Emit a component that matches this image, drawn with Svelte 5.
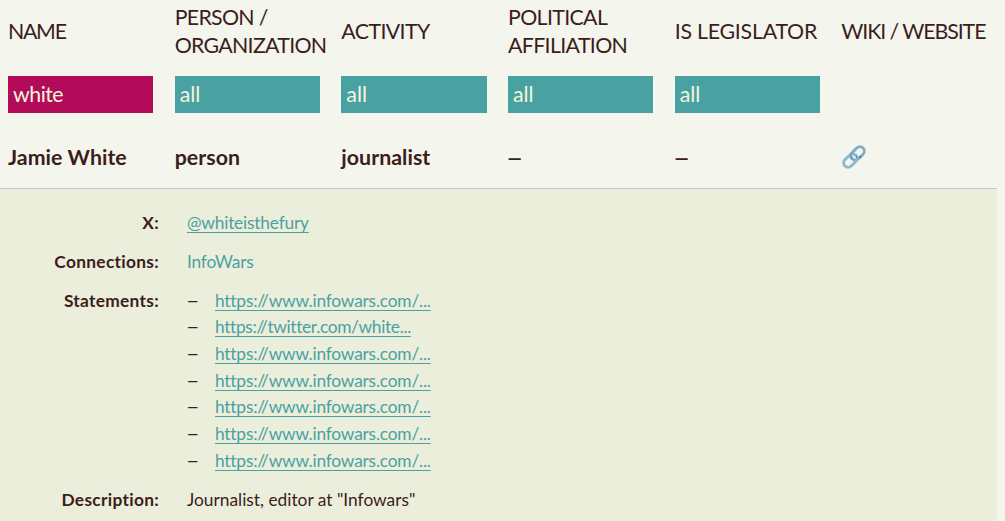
<script>
    const columns = [
        { title: 'Name', filter: 'white', value: 'Jamie White', spacing: -1.3, active: true },
        { title: 'Person / Organization', filter: 'all', value: 'person', spacing: -0.7 },
        { title: 'Activity', filter: 'all', value: 'journalist', spacing: -0.6 },
        { title: 'Political affiliation', filter: 'all', value: '–', spacing: -0.64 },
        { title: 'Is legislator', filter: 'all', value: '–', spacing: -0.22 },
        { title: 'Wiki / Website', spacing: -1.07, wide: true },
    ];

    const statements = [
        'https://www.infowars.com/...',
        'https://twitter.com/white...',
        'https://www.infowars.com/...',
        'https://www.infowars.com/...',
        'https://www.infowars.com/...',
        'https://www.infowars.com/...',
        'https://www.infowars.com/...',
    ];
</script>

<div class="table">
    <div class="row head">
        {#each columns as { title, spacing, wide }}
            <div class:wide style="letter-spacing: {spacing}px">{title}</div>
        {/each}
    </div>

    <div class="row filters">
        {#each columns as { filter, active }}
            {#if filter}
                <div class="filter" class:active>{filter}</div>
            {/if}
        {/each}
    </div>

    <div class="row person">
        {#each columns as { value }}
            {#if value}
                <div class:dash={value === '–'}>{value}</div>
            {:else}
                <a class="icon" href="#wiki" aria-label="Website">
                    <svg width="26" height="26" viewBox="0 0 26 26" fill="none">
                        <g transform="rotate(-45 13 13)">
                            <rect x="10.4" y="8.6" width="15.4" height="8.8" rx="4.4" stroke="#82adc8" stroke-width="2.9" />
                            <rect x="0.2" y="8.6" width="15.4" height="8.8" rx="4.4" stroke="#8bb9d2" stroke-width="2.9" />
                            <path d="M10.4 13a4.4 4.4 0 0 1 4.4-4.4" stroke="#71a7bf" stroke-width="2.7" />
                            <path d="M15.6 13v.2a4 4 0 0 1-1.4 3" stroke="#5c9db2" stroke-width="1.4" />
                            <path d="M16.6 17.4h2" stroke="#377c8f" stroke-width="1.8" />
                        </g>
                    </svg>
                </a>
            {/if}
        {/each}
    </div>

    <dl class="details">
        <dt>X:</dt>
        <dd><a class="handle" href="#x">@whiteisthefury</a></dd>

        <dt>Connections:</dt>
        <dd class="connection">InfoWars</dd>

        <dt>Statements:</dt>
        <dd>
            <ul>
                {#each statements as url}
                    <li><a class:twitter={url.includes('twitter')} href="#statement">{url}</a></li>
                {/each}
            </ul>
        </dd>

        <dt>Description:</dt>
        <dd class="description">Journalist, editor at "Infowars"</dd>
    </dl>
</div>

<style>
    :global(body) {
        background: #f4f5ec;
        overflow: hidden;
    }

    .table {
        width: 997px;
        padding-top: 3px;
        color: #3b1d20;
        font-family: Lato, sans-serif;
        font-size: 21.33px;
        font-variant-ligatures: none;
        line-height: 28px;
    }

    .row {
        display: grid;
        grid-template-columns: repeat(6, 166.67px);
        align-items: center;
        padding-left: 8px;
    }

    .head {
        height: 56px;
        text-transform: uppercase;
    }

    .head div {
        width: 154px;
    }

    .head .wide {
        white-space: nowrap;
    }

    .filters {
        padding-top: 17px;
    }

    .filter {
        box-sizing: border-box;
        width: 145.33px;
        height: 37px;
        padding-left: 5px;
        line-height: 36px;
        background: #4aa1a2;
        color: #f4f5dc;
    }

    .active {
        background: #b20b59;
        letter-spacing: -0.5px;
    }

    .person {
        height: 75px;
        border-bottom: 1px solid #c5c5ca;
        font-weight: 700;
    }

    .person > div {
        margin-top: 13px;
        letter-spacing: 0.05px;
    }

    .person .dash {
        margin-left: -2px;
        transform: scaleX(1.4);
        transform-origin: 0 50%;
    }

    .icon {
        display: flex;
        margin-top: 13px;
    }

    .details {
        display: grid;
        grid-template-columns: 159px 1fr;
        column-gap: 28px;
        row-gap: 12px;
        height: 340px;
        align-content: start;
        box-sizing: border-box;
        margin: 0;
        padding-top: 21.3px;
        background: #ebeedb;
        font-size: 17.33px;
        line-height: 26.67px;
    }

    dt {
        font-weight: 700;
        letter-spacing: 0.3px;
        text-align: right;
    }

    dt:last-of-type,
    .description {
        padding-top: 1px;
    }

    dd {
        margin: 0;
    }

    .details a,
    .connection {
        color: #4aa1a2;
        letter-spacing: -0.2px;
        text-decoration-thickness: 1px;
        text-underline-offset: 3px;
    }

    .details .twitter {
        letter-spacing: -0.34px;
    }

    ul {
        list-style: none;
        margin: 0;
        padding: 0;
    }

    li {
        display: flex;
    }

    li::before {
        content: '–';
        width: 20px;
        margin: 0 9px 0 -1px;
        transform: scaleX(1.35);
        transform-origin: 0 50%;
    }
</style>
